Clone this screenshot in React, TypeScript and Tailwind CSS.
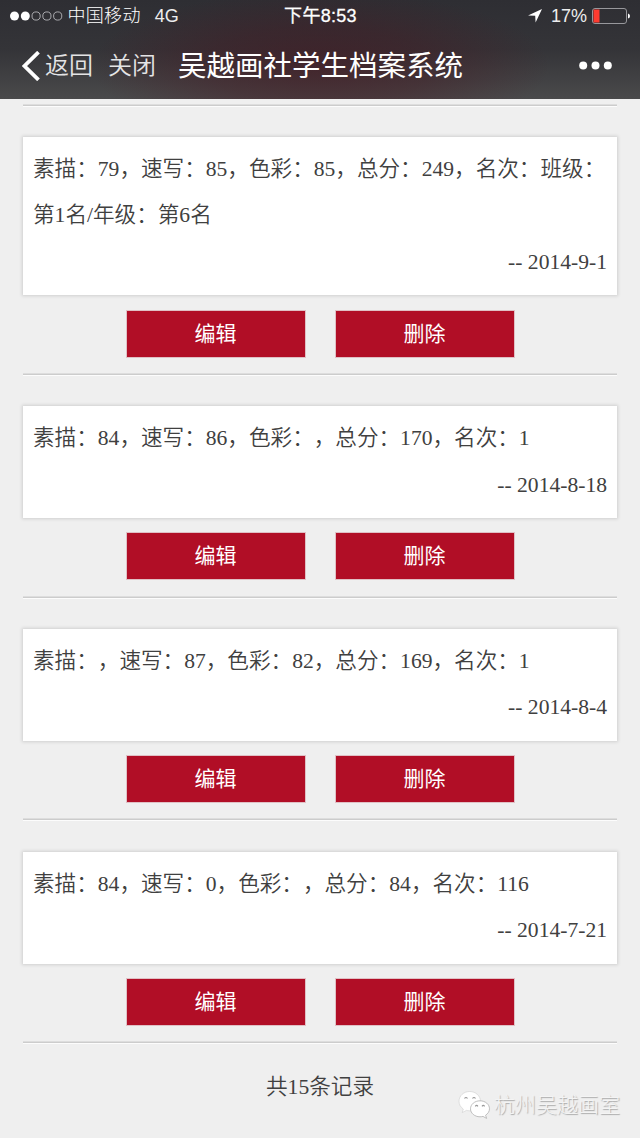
import type { ReactNode } from "react";

type Entry = { text: string; date: string };

const entries: Entry[] = [
  { text: "素描：79，速写：85，色彩：85，总分：249，名次：班级：第1名/年级：第6名", date: "2014-9-1" },
  { text: "素描：84，速写：86，色彩：，总分：170，名次：1", date: "2014-8-18" },
  { text: "素描：，速写：87，色彩：82，总分：169，名次：1", date: "2014-8-4" },
  { text: "素描：84，速写：0，色彩：，总分：84，名次：116", date: "2014-7-21" },
];

function StatusBar() {
  return (
    <div className="flex h-8 items-center px-2.5 text-[18px] leading-8 whitespace-nowrap">
      <div className="flex flex-1 items-center">
        <svg width="54" height="12" viewBox="0 0 54 12">
          {[0, 1, 2, 3, 4].map((i) => (
            <circle key={i} cx={4.5 + i * 10.8} cy="6" r={i < 2 ? 4.5 : 4.1} fill={i < 2 ? "#fff" : "none"} stroke={i < 2 ? "none" : "#c8c8cc"} strokeWidth="0.8" />
          ))}
        </svg>
        <span className="ml-[3.5px] font-light tracking-[0.3px]">中国移动</span>
        <span className="ml-3.5 text-[#ededee]">4G</span>
      </div>
      <div className="tracking-[0.3px] [-webkit-text-stroke:0.3px_#fff]">下午8:53</div>
      <div className="-mr-[1px] flex flex-1 items-center justify-end">
        <svg width="14" height="14" viewBox="0 0 14 14">
          <path d="M14 0 L7.6 13.6 L7.2 6.8 L0 6.6 Z" fill="#fff" />
        </svg>
        <span className="ml-[9px] text-[#ededee]">17%</span>
        <svg className="ml-[5px]" width="39" height="16" viewBox="0 0 39 16">
          <rect x="0.5" y="0.5" width="34" height="15" rx="2.5" fill="none" stroke="#98989c" />
          <rect x="1.5" y="1.5" width="6" height="13" fill="#ff3b30" />
          <path d="M36 5.5 Q38 6 38 8 Q38 10 36 10.5 Z" fill="#fff" />
        </svg>
      </div>
    </div>
  );
}

function Header() {
  return (
    <header className="h-[99px] bg-[radial-gradient(ellipse_230px_75px_at_50%_66%,rgba(72,20,30,0.55),rgba(72,20,30,0.35)_50%,transparent),linear-gradient(#2e2e33,#343438_50%,#4a4a4b)] text-white">
      <StatusBar />
      <div className="flex h-[67px] items-center pr-7 pl-[22px] whitespace-nowrap">
        <svg width="18" height="30" viewBox="0 0 18 30">
          <path d="M16.5 1.2 L2.5 15 L16.5 28.8" fill="none" stroke="#fff" strokeWidth="3.8" />
        </svg>
        <span className="ml-[5px] text-[24px] font-[350] text-[#e4e4e5]">返回</span>
        <span className="ml-[15px] text-[24px] font-[350] text-[#e4e4e5]">关闭</span>
        <h1 className="mt-0.5 ml-[22px] text-[28.5px] font-normal">吴越画社学生档案系统</h1>
        <svg className="ml-auto" width="33" height="10" viewBox="0 0 33 10">
          <circle cx="4.2" cy="4.5" r="4" fill="#fff" />
          <circle cx="16.5" cy="4.5" r="4" fill="#fff" />
          <circle cx="28.8" cy="4.5" r="4" fill="#fff" />
        </svg>
      </div>
    </header>
  );
}

function Divider() {
  return (
    <div className="h-[3px] border-t border-b border-t-[#dddddd] border-b-[#fcfcfc] bg-[#cccccc]" />
  );
}

function ActionButton({ children }: { children: ReactNode }) {
  return (
    <button className="h-[46px] w-[178px] bg-[#b10e26] pb-[4px] font-['Liberation_Sans','Noto_Sans_CJK_SC',sans-serif] text-[21px] font-normal text-white shadow-[0_0_0_1px_#e0c0c5]">
      {children}
    </button>
  );
}

function Record({ text, date }: Entry) {
  return (
    <section className="pt-[30.5px]">
      <div className="bg-white pt-[9px] pr-[10px] pb-[10px] pl-[10px] shadow-[0_0_3px_1px_#cfcfcf]">
        <p>{text}</p>
        <p className="text-right">-- {date}</p>
      </div>
      <div className="flex gap-[31px] pt-[15.3px] pb-[16.2px] pl-[103.5px]">
        <ActionButton>编辑</ActionButton>
        <ActionButton>删除</ActionButton>
      </div>
      <Divider />
    </section>
  );
}

function Watermark() {
  return (
    <div className="absolute top-[1088px] left-[458px] flex items-center font-['Noto_Sans_CJK_SC',sans-serif] text-[21px] leading-[32px] font-light text-[#f4f4f4] [text-shadow:1px_1px_1px_#aaa]">
      <svg width="33" height="32" viewBox="0 0 33 32">
        <path d="M11.7 3.500C5.700 3.500 1 7.800 1 13.300c0 3.200 1.600 5.900 4.300 7.700L4.200 24.600l4.200-2.200c1 .3 2.200.4 3.300.4 6 0 10.800-4.200 10.800-9.500S17.700 3.500 11.700 3.500Z" fill="#fff" stroke="#cfcfcf" strokeWidth=".6" />
        <path d="M22 12.800c-5.300 0-9.500 3.600-9.500 8s4.200 8 9.500 8c1 0 2-.2 3-.4l3.600 2-1-3.200c2.300-1.500 3.900-3.800 3.900-6.400 0-4.400-4.200-8-9.500-8Z" fill="#fff" stroke="#b0b0b0" strokeWidth=".8" />
        <g fill="none" stroke="#999" strokeWidth="1.2">
          <path d="M6.500 10.500q1.500-2 3 0M14.500 10.500q1.500-2 3 0M17.300 18.300q1.300-1.700 2.600 0M24 18.300q1.300-1.700 2.600 0" />
        </g>
      </svg>
      <span className="ml-[3px] -translate-y-px">杭州吴越画室</span>
    </div>
  );
}

export default function App() {
  return (
    <div className="relative h-[1138px] w-[640px] overflow-hidden bg-[#efefef] font-['Liberation_Sans','Noto_Sans_CJK_SC',sans-serif] [text-spacing-trim:space-all]" lang="zh-CN">
      <Header />
      <main className="px-[23px] pt-1 font-['Liberation_Serif','Noto_Sans_CJK_SC',serif] text-[21.6px] leading-[46.4px] font-[350] text-[#404040]">
        <div className="pt-[0.5px]">
          <Divider />
        </div>
        {entries.map((entry) => (
          <Record key={entry.date} {...entry} />
        ))}
        <p className="pt-[20px] text-center">共15条记录</p>
      </main>
      <Watermark />
    </div>
  );
}
